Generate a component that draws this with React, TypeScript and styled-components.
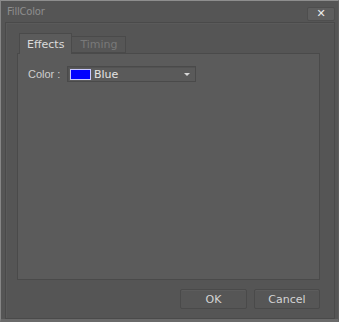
import styled, { createGlobalStyle } from "styled-components";

const GlobalStyle = createGlobalStyle`
  html, body {
    margin: 0;
    padding: 0;
    background: #555555;
  }
  body {
    font-family: "DejaVu Sans", "Liberation Sans", sans-serif;
  }
`;

const Window = styled.div`
  width: 339px;
  height: 322px;
  box-sizing: border-box;
  display: flex;
  flex-direction: column;
  background: #555555;
  border-top: 1px solid #8e8e8e;
  border-left: 1px solid #868686;
  border-right: 1px solid #5e5e5e;
  border-bottom: 3px solid #6a6a6a;
`;

const TitleBar = styled.div`
  height: 21px;
  display: flex;
  align-items: center;
  justify-content: space-between;
  padding: 0 3px 0 6px;
`;

const Title = styled.span`
  color: #8e8e8e;
  font-size: 10px;
  letter-spacing: -0.2px;
`;

const CloseButton = styled.div`
  width: 26px;
  height: 12px;
  margin-top: 4px;
  display: flex;
  align-items: center;
  justify-content: center;
  background: #5e5e5e;
  border: 1px solid #4e4e4e;
  border-radius: 2px;
  color: #ececec;
  font-size: 11px;
  font-weight: bold;
  line-height: 1;
`;

const Frame = styled.div`
  flex: 1;
  margin: 0 3px 0 4px;
  display: flex;
  flex-direction: column;
  border: 1px solid #4a4a4a;
  box-shadow: inset 1px 1px 0 #5a5a5a;
  padding: 10px 14px 9px 11px;
`;

const TabStrip = styled.div`
  display: flex;
  align-items: flex-end;
  padding-left: 2px;
  height: 20px;
`;

const Tab = styled.div<{ $active?: boolean }>`
  box-sizing: border-box;
  height: ${({ $active }) => ($active ? "21px" : "17px")};
  margin-bottom: ${({ $active }) => ($active ? "-1px" : "0")};
  padding: 0 7px 0 ${({ $active }) => ($active ? "7px" : "8px")};
  display: flex;
  align-items: center;
  background: ${({ $active }) => ($active ? "#5b5b5b" : "#565656")};
  border: 1px solid #4a4a4a;
  border-bottom: ${({ $active }) => ($active ? "none" : "1px solid #4a4a4a")};
  border-left: ${({ $active }) => ($active ? "1px solid #4a4a4a" : "none")};
  color: ${({ $active }) => ($active ? "#dcdcdc" : "#797979")};
  font-size: 11px;
  position: relative;
  z-index: ${({ $active }) => ($active ? 1 : 0)};
`;

const Panel = styled.div`
  flex: 1;
  background: #5b5b5b;
  border: 1px solid #4a4a4a;
  padding: 12px 10px;
`;

const FieldRow = styled.div`
  display: flex;
  align-items: center;
  gap: 6px;
`;

const Label = styled.span`
  width: 33px;
  color: #cfcfcf;
  font-family: "Liberation Sans", sans-serif;
  font-size: 11px;
  white-space: nowrap;
`;

const Select = styled.div`
  width: 129px;
  height: 16px;
  box-sizing: border-box;
  display: flex;
  align-items: center;
  gap: 3px;
  padding: 0 5px 0 2px;
  background: #5a5a5a;
  border: 1px solid #4a4a4a;
  box-shadow: inset 1px 1px 0 #525252;
`;

const Swatch = styled.span<{ $color: string }>`
  width: 19px;
  height: 9px;
  background: ${({ $color }) => $color};
  border: 1px solid #c8c8ff;
`;

const SelectText = styled.span`
  flex: 1;
  color: #e4e4e4;
  font-size: 11px;
`;

const Arrow = styled.span`
  width: 0;
  height: 0;
  border-left: 3px solid transparent;
  border-right: 3px solid transparent;
  border-top: 3px solid #d8d8d8;
`;

const Footer = styled.div`
  display: flex;
  justify-content: flex-end;
  gap: 7px;
  margin-top: 9px;
`;

const Button = styled.div<{ $width: number }>`
  width: ${({ $width }) => $width}px;
  height: 20px;
  box-sizing: border-box;
  display: flex;
  align-items: center;
  justify-content: center;
  background: #565656;
  border: 1px solid #4a4a4a;
  border-radius: 2px;
  box-shadow: inset 0 1px 0 #5c5c5c;
  color: #d4d4d4;
  font-size: 11px;
`;

export default function App() {
  return (
    <>
      <GlobalStyle />
      <Window>
        <TitleBar>
          <Title>FillColor</Title>
          <CloseButton>✕</CloseButton>
        </TitleBar>
        <Frame>
          <TabStrip>
            <Tab $active>Effects</Tab>
            <Tab>Timing</Tab>
          </TabStrip>
          <Panel>
            <FieldRow>
              <Label>Color :</Label>
              <Select>
                <Swatch $color="#0000ff" />
                <SelectText>Blue</SelectText>
                <Arrow />
              </Select>
            </FieldRow>
          </Panel>
          <Footer>
            <Button $width={67}>OK</Button>
            <Button $width={66}>Cancel</Button>
          </Footer>
        </Frame>
      </Window>
    </>
  );
}
